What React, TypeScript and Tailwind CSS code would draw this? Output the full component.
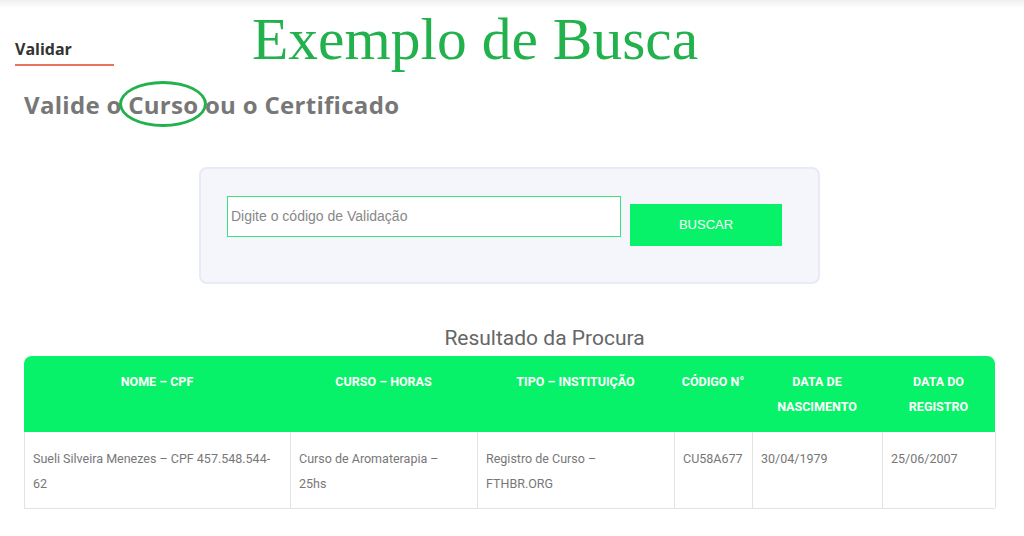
export default function App() {
    const heads = [
        'NOME – CPF',
        'CURSO – HORAS',
        'TIPO – INSTITUIÇÃO',
        'CÓDIGO N°',
        'DATA DE NASCIMENTO',
        'DATA DO REGISTRO',
    ];
    const row = [
        'Sueli Silveira Menezes – CPF 457.548.544-62',
        'Curso de Aromaterapia – 25hs',
        'Registro de Curso – FTHBR.ORG',
        'CU58A677',
        '30/04/1979',
        '25/06/2007',
    ];
    const widths = ['w-[266px]', 'w-[187px]', 'w-[197px]', 'w-[78px]', 'w-[130px]', 'w-[113px]'];

    return (
        <div className="w-[1024px] h-[536px] bg-white relative overflow-hidden font-['Roboto',sans-serif]">
            {/* top shadow strip */}
            <div className="h-[8px] bg-gradient-to-b from-[#efefef] to-white" />

            {/* Header row */}
            <div className="flex items-start h-[66px]">
                <div className="ml-[15px] mt-[30px] w-[99px]">
                    <div className="text-[16px] font-bold text-[#333] leading-[22px] font-['Open_Sans',sans-serif]">Validar</div>
                    <div className="h-[2px] bg-[#e8735f] mt-[4px]" />
                </div>
                <div className="ml-[138px] -mt-[3px] text-[59.5px] leading-[68px] text-[#22b14c] font-['Liberation_Serif',serif]">
                    Exemplo de Busca
                </div>
            </div>

            {/* Subtitle */}
            <div className="relative ml-[24px] mt-[16px] text-[24px] font-bold text-[#777] leading-[30px] tracking-[0.3px] font-['Open_Sans',sans-serif] w-fit">
                Valide o <span className="relative">Curso
                    <span className="absolute left-[-9px] right-[-9px] top-[-7px] bottom-[-6px] rounded-[50%] border-[3px] border-[#22b14c]" />
                </span> ou o Certificado
            </div>

            {/* Search box */}
            <div className="ml-[199px] mt-[47px] w-[621px] h-[117px] bg-[#f5f6fc] border-2 border-[#e8eaf6] rounded-[8px] flex items-start pt-[27px] pl-[26px]">
                <div className="w-[394px] h-[41px] bg-white border border-[#3ee07e] flex items-center pl-[3px] text-[14px] text-[#888] font-['Liberation_Sans',sans-serif]">
                    Digite o código de Validação
                </div>
                <button className="ml-[9px] mt-[8px] w-[152px] h-[42px] bg-[#07f268] text-white text-[13px] font-['Liberation_Sans',sans-serif]">
                    BUSCAR
                </button>
            </div>

            {/* Results */}
            <div className="mt-[42px] text-center text-[21px] leading-[24px] text-[#666] ml-[24px] w-[971px] pl-[70px]">
                Resultado da Procura
            </div>

            <div className="ml-[24px] mt-[6px] w-[971px]">
                <div className="flex bg-[#07f268] rounded-t-[8px] h-[76px]">
                    {heads.map((h, i) => (
                        <div key={h} className={`${widths[i]} shrink-0 pt-[13px] px-[4px] text-center text-white font-bold text-[12.5px] leading-[25px]`}>
                            {h}
                        </div>
                    ))}
                </div>
                <div className="flex h-[77px] border-b border-l border-[#e3e3e3]">
                    {row.map((c, i) => (
                        <div key={c} className={`${widths[i]} shrink-0 border-r border-[#e3e3e3] pt-[14px] px-[8px] text-[12.5px] leading-[25px] text-[#777]`}>
                            {c}
                        </div>
                    ))}
                </div>
            </div>
        </div>
    );
}
